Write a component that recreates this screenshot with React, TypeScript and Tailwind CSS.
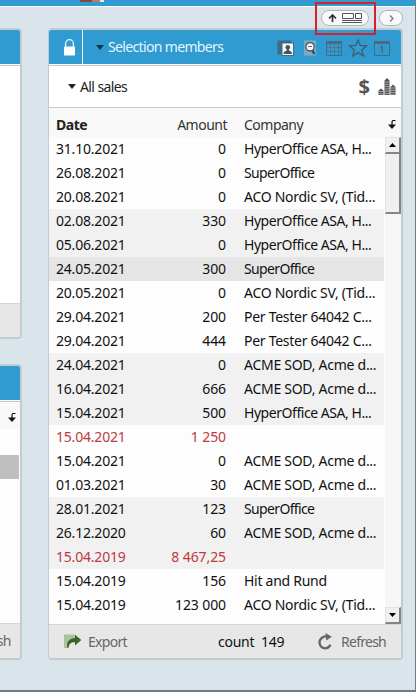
import React from "react";

type Tone = "white" | "grey" | "dark";
type Row = { date: string; amount: string; company: string; tone: Tone; red?: boolean };

const rows: Row[] = [
  { date: "31.10.2021", amount: "0", company: "HyperOffice ASA, H...", tone: "white" },
  { date: "26.08.2021", amount: "0", company: "SuperOffice", tone: "white" },
  { date: "20.08.2021", amount: "0", company: "ACO Nordic SV, (Tid...", tone: "white" },
  { date: "02.08.2021", amount: "330", company: "HyperOffice ASA, H...", tone: "grey" },
  { date: "05.06.2021", amount: "0", company: "HyperOffice ASA, H...", tone: "grey" },
  { date: "24.05.2021", amount: "300", company: "SuperOffice", tone: "dark" },
  { date: "20.05.2021", amount: "0", company: "ACO Nordic SV, (Tid...", tone: "white" },
  { date: "29.04.2021", amount: "200", company: "Per Tester 64042 C...", tone: "white" },
  { date: "29.04.2021", amount: "444", company: "Per Tester 64042 C...", tone: "white" },
  { date: "24.04.2021", amount: "0", company: "ACME SOD, Acme d...", tone: "grey" },
  { date: "16.04.2021", amount: "666", company: "ACME SOD, Acme d...", tone: "grey" },
  { date: "15.04.2021", amount: "500", company: "HyperOffice ASA, H...", tone: "grey" },
  { date: "15.04.2021", amount: "1 250", company: "", tone: "white", red: true },
  { date: "15.04.2021", amount: "0", company: "ACME SOD, Acme d...", tone: "white" },
  { date: "01.03.2021", amount: "30", company: "ACME SOD, Acme d...", tone: "white" },
  { date: "28.01.2021", amount: "123", company: "SuperOffice", tone: "grey" },
  { date: "26.12.2020", amount: "60", company: "ACME SOD, Acme d...", tone: "grey" },
  { date: "15.04.2019", amount: "8 467,25", company: "", tone: "grey", red: true },
  { date: "15.04.2019", amount: "156", company: "Hit and Rund", tone: "white" },
  { date: "15.04.2019", amount: "123 000", company: "ACO Nordic SV, (Tid...", tone: "white" },
];

const toneClass: Record<Tone, string> = {
  white: "bg-[#fdfdfd]",
  grey: "bg-[#f1f1f1]",
  dark: "bg-[#e5e5e5]",
};

function companyTracking(name: string) {
  if (name.startsWith("Super")) return "tracking-[-0.65px]";
  if (name.startsWith("Hyper")) return "tracking-[-0.45px]";
  return "tracking-[-0.27px]";
}

function Caret({ className }: { className: string }) {
  return (
    <svg width="8" height="5" viewBox="0 0 8 5" className={className}>
      <path d="M0 0h8L4 5z" fill="currentColor" />
    </svg>
  );
}

function SortArrow() {
  return (
    <svg width="8" height="9" viewBox="0 0 8 9" className="shrink-0">
      <path d="M7.5 .5H5.5Q4 .5 4 2.5V6" fill="none" stroke="#111" strokeWidth="1.2" />
      <path d="M0 4.5h8L4 9z" fill="#111" />
    </svg>
  );
}

function Lock() {
  return (
    <svg width="11" height="17" viewBox="0 0 11 17">
      <path d="M1.6 8V4.6a3.9 3.9 0 0 1 7.8 0V8" fill="none" stroke="#e4f4fc" strokeWidth="1.3" />
      <rect x="0" y="7.5" width="11" height="9" rx=".8" fill="#fff" />
    </svg>
  );
}

function PersonIcon() {
  return (
    <svg width="18" height="16" viewBox="0 0 18 16">
      <rect x="0.5" y="0.5" width="14" height="14" fill="#3f6a84" />
      <rect x="5" y="3" width="11.5" height="12.5" fill="#f6fafc" stroke="#48697d" />
      <circle cx="10.8" cy="7.3" r="2.3" fill="#46545d" />
      <path d="M6.5 14c0-2.4 1.5-3 3.2-3.6V9h2.2v1.4c1.7.6 3.2 1.2 3.2 3.6z" fill="#46545d" />
    </svg>
  );
}

function SearchIcon() {
  return (
    <svg width="14" height="16" viewBox="0 0 14 16">
      <rect x="1" y="0.5" width="12" height="15" fill="#7fa9c2" />
      <path d="M9.3 10l2 4" stroke="#34495a" strokeWidth="2.2" />
      <circle cx="7" cy="6.8" r="4.2" fill="#f3f8fa" stroke="#45525b" strokeWidth="1.3" />
      <path d="M5 6.5h4" stroke="#5b6b75" />
    </svg>
  );
}

function GridCalendar() {
  return (
    <svg width="16" height="16" viewBox="0 0 16 16" fill="none" stroke="#496b80">
      <path d="M.5 2.5h15v13H.5z" />
      <path d="M0 2.5h16" strokeWidth="3" />
      <path d="M.5 7.5h15M.5 11.5h15M4.5 4v11.5M8.5 4v11.5M12.5 4v11.5" strokeOpacity=".65" />
    </svg>
  );
}

function StarIcon() {
  return (
    <svg width="20" height="18" viewBox="0 0 20 18">
      <path d="M10 1l2.3 5.5 6.2.4-4.7 4 1.5 6L10 13.6 4.7 17l1.5-6.1-4.7-4 6.2-.4z" fill="none" stroke="#405c6e" strokeWidth="1.3" />
    </svg>
  );
}

function DayCalendar() {
  return (
    <svg width="16" height="16" viewBox="0 0 16 16" fill="none" stroke="#496b80">
      <path d="M.5 2.5h15v13H.5z" />
      <path d="M0 2.5h16" strokeWidth="3" />
      <path d="M6.3 7.700l1.900-1.200v6.500" strokeWidth="1.5" />
    </svg>
  );
}

function Buildings() {
  return (
    <svg width="18" height="17" viewBox="0 0 18 17">
      <path d="M.5 17v-4.5l2.5-2 2.5 2V17zM6.5 17V2.5L9 0l2.5 2.5V17zM12.5 17V9L15 6.5 17.5 9v8z" fill="#555" />
      <path d="M2 13v4M4 13v4M8 3.5V17M10 3.5V17M14 9.5V17M16 9.5V17" stroke="#fff" strokeWidth=".9" strokeDasharray="1 1.3" />
    </svg>
  );
}

function ExportIcon() {
  return (
    <svg width="18" height="15" viewBox="0 0 18 15">
      <path d="M0 .5h11v3L4 7v7H0z" fill="#abc09f" />
      <path d="M3.5 14C2 8 5 4.500 11 4V.7L17.300 6 11 11.400V8.200C7.500 7.900 4.800 9.500 4.500 14z" fill="#3c6424" />
    </svg>
  );
}

function RefreshIcon() {
  return (
    <svg width="15" height="17" viewBox="0 0 15 17">
      <path d="M10 3.7C5.5 2.6 1.5 5.500 1.5 9.500c0 3.300 2.600 5.800 5.700 5.800 2.400 0 4.300-1.300 5.300-3.500" fill="none" stroke="#666" strokeWidth="2.300" />
      <path d="M7.5 0l6.300 3.700L8.300 7.600z" fill="#666" />
    </svg>
  );
}

function ScrollButton({ down = false }: { down?: boolean }) {
  return (
    <div className="flex h-[17px] w-4 shrink-0 items-center justify-center border-r-2 border-b-2 border-t border-l border-t-[#e3e3e3] border-l-[#e3e3e3] border-r-[#858585] border-b-[#858585] bg-[#f0f0f0]">
      <svg width="7" height="4" viewBox="0 0 7 4">
        <path d={down ? "M0 0h7L3.5 4z" : "M0 4h7L3.5 0z"} fill="#000" />
      </svg>
    </div>
  );
}

function LeftColumn() {
  return (
    <div className="flex w-[22px] shrink-0 flex-col">
      <div className="flex h-[311px] flex-col overflow-hidden rounded-r-[4px] border-2 border-l-0 border-[#c2cbd0] bg-white">
        <div className="h-[34px] shrink-0 bg-[#309bd0]" />
        <div className="mt-px h-px shrink-0 bg-[#c8c8c8]" />
        <div className="flex-1" />
        <div className="h-[34px] shrink-0 border-t border-[#d4d4d4] bg-[#e7e7e7]" />
      </div>
      <div className="mt-[25px] flex h-[296px] flex-col overflow-hidden rounded-r-[4px] border-2 border-l-0 border-[#c2cbd0] bg-[#fdfdfd]">
        <div className="h-[34px] shrink-0 bg-[#309bd0]" />
        <div className="mt-px h-px shrink-0 bg-[#c8c8c8]" />
        <div className="flex h-[27px] shrink-0 items-center bg-[#f8f8f8] pl-2 pt-1">
          <SortArrow />
        </div>
        <div className="mt-[26px] h-6 w-[19px] shrink-0 bg-[#bfbfbf]" />
        <div className="flex-1" />
        <div className="flex h-[35px] shrink-0 items-center justify-end border-t border-[#d4d4d4] bg-[#e7e7e7] pr-[9px] tracking-[-0.5px] text-[#666]">
          sh
        </div>
      </div>
    </div>
  );
}

function SelectionPanel() {
  return (
    <div className="ml-[26px] flex h-[632px] w-[355px] shrink-0 flex-col overflow-hidden rounded-[4px] border-2 border-l-1 border-[#c2cbd0] bg-white">
      <div className="flex h-[34px] shrink-0 items-center bg-[#309bd0] text-[#e2f6ff]">
        <div className="flex h-full w-[34px] items-center border-r border-white pl-[15px] pt-px">
          <Lock />
        </div>
        <Caret className="ml-[13px] text-[#123347]" />
        <span className="ml-1 whitespace-nowrap tracking-[-0.65px]">Selection members</span>
        <div className="ml-auto flex items-center pr-[11px] pt-px">
          <PersonIcon />
          <span className="ml-[8px]"><SearchIcon /></span>
          <span className="ml-[9px]"><GridCalendar /></span>
          <span className="ml-[6px]"><StarIcon /></span>
          <span className="ml-[6px]"><DayCalendar /></span>
        </div>
      </div>
      <div className="mt-px h-px shrink-0 bg-[#c8c8c8]" />
      <div className="flex h-[41px] shrink-0 items-center text-[#222]">
        <Caret className="ml-[19px]" />
        <span className="ml-1 tracking-[-0.6px]">All sales</span>
        <span className="ml-auto font-['Open_Sans'] text-[20px] font-bold text-[#555]">$</span>
        <span className="ml-[8px] pr-[5px]"><Buildings /></span>
      </div>
      <div className="h-px shrink-0 bg-[#c8c8c8]" />
      <div className="flex h-[29px] shrink-0 items-center bg-[#f8f8f8] pt-1 text-[#333]">
        <span className="w-[87px] pl-[7px] font-bold tracking-[-0.5px] text-[#222]">Date</span>
        <span className="w-[91px] text-right tracking-[-0.5px]">Amount</span>
        <span className="pl-[17px] tracking-[-0.5px]">Company</span>
        <span className="ml-auto pr-[5px]"><SortArrow /></span>
      </div>
      <div className="flex h-[487px] shrink-0">
        <div className="w-[335px] bg-[#fdfdfd]">
          {rows.map((r, i) => (
            <div key={i} className={`flex h-6 items-center whitespace-nowrap ${toneClass[r.tone]} ${r.red ? "text-[#bd3a41]" : "text-[#111]"}`}>
              <span className="w-[87px] pl-[7px] tracking-[-0.2px]">{r.date}</span>
              <span className="w-[90px] text-right tracking-[-0.1px]">{r.amount}</span>
              <span className={`pl-[18px] ${companyTracking(r.company)}`}>{r.company}</span>
            </div>
          ))}
        </div>
        <div className="ml-px flex w-4 flex-col bg-[#f6f6f6]">
          <ScrollButton />
          <div className="h-[60px] border-r-2 border-b-2 border-l border-l-[#e3e3e3] border-r-[#858585] border-b-[#858585] bg-[#f0f0f0]" />
          <div className="flex-1" />
          <ScrollButton down />
        </div>
      </div>
      <div className="flex min-h-0 flex-1 items-center border-t border-[#d4d4d4] bg-[#e7e7e7] text-[#666]">
        <span className="ml-[15px]"><ExportIcon /></span>
        <span className="ml-[6px] w-[130px] tracking-[-0.7px]">Export</span>
        <span className="whitespace-pre tracking-[-0.25px] text-[#111]">count  149</span>
        <span className="ml-auto"><RefreshIcon /></span>
        <span className="ml-[8px] pr-[15px] tracking-[-0.75px]">Refresh</span>
      </div>
    </div>
  );
}

export default function App() {
  return (
    <div className="flex h-[692px] w-[416px] flex-col overflow-hidden border-r border-b-2 border-[#747b80] bg-[#dae5eb] font-['Noto_Sans',sans-serif] text-sm leading-[18px]">
      <div className="h-[7px] shrink-0 border-b border-white bg-[#309bd0]">
        <div className="ml-20 flex h-[2px] w-6">
          <div className="w-3 bg-[#804b38]" />
          <div className="w-2 bg-[#b77e5f]" />
          <div className="w-1 bg-[#dfe9ef]" />
        </div>
      </div>
      <div className="relative h-[21px] shrink-0">
        <div className="flex h-full justify-end gap-[10px] pr-[12px] pt-[3px]">
          <div className="flex h-4 w-[48px] items-center justify-center gap-[5px] rounded-full border border-[#b0b7bb] bg-[#fafafa]">
            <svg width="9" height="8" viewBox="0 0 9 8">
              <path d="M4.5 8V1.5M1 4.5l3.5-3.5L8 4.5" fill="none" stroke="#333" strokeWidth="1.7" />
            </svg>
            <svg width="20" height="11" viewBox="0 0 20 11" fill="none" stroke="#555">
              <path d="M.5 .5h11v5H.5zM13.500 .5h6v5h-6zM0 7.500h20M0 9.500h20" />
            </svg>
          </div>
          <div className="flex h-4 w-[24px] items-center justify-center rounded-full border border-[#b0b7bb] bg-[#fafafa]">
            <svg width="5" height="7" viewBox="0 0 5 7">
              <path d="M1 .5l3 3-3 3" fill="none" stroke="#777" strokeWidth="1.2" />
            </svg>
          </div>
        </div>
        <div className="absolute -top-[5px] left-[315px] h-[33px] w-[61px] border-2 border-[#d8202c]" />
      </div>
      <div className="flex">
        <LeftColumn />
        <SelectionPanel />
      </div>
    </div>
  );
}
